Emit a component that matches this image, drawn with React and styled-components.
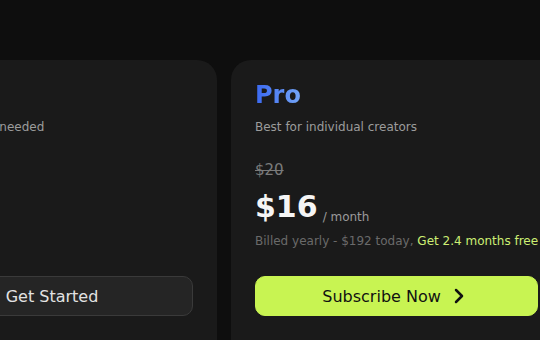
import React from 'react';
import styled, { createGlobalStyle } from 'styled-components';
import { ChevronRight } from 'lucide-react';

const GlobalStyle = createGlobalStyle`
  * { box-sizing: border-box; }
  body {
    margin: 0;
    background: #0e0e0e;
    font-family: 'DejaVu Sans', 'Liberation Sans', sans-serif;
    overflow: hidden;
  }
`;

const plans = [
	{
		name: 'Free',
		tagline: 'No credit card needed',
		price: '$0',
		note: 'Free forever',
		cta: 'Get Started',
		primary: false,
	},
	{
		name: 'Pro',
		tagline: 'Best for individual creators',
		oldPrice: '$20',
		price: '$16',
		period: '/ month',
		note: 'Billed yearly - $192 today,',
		bonus: 'Get 2.4 months free',
		cta: 'Subscribe Now',
		primary: true,
	},
];

function App() {
	return (
		<Page>
			<GlobalStyle />
			<Row>
				{plans.map((plan) => (
					<Card key={plan.name}>
						<Title $accent={plan.primary}>{plan.name}</Title>
						<Tagline>{plan.tagline}</Tagline>
						<OldPrice $hidden={!plan.oldPrice}>{plan.oldPrice || '$0'}</OldPrice>
						<PriceRow>
							<Price>{plan.price}</Price>
							{plan.period && <Period>{plan.period}</Period>}
						</PriceRow>
						<Note>
							{plan.note}
							{plan.bonus && <Bonus> {plan.bonus}</Bonus>}
						</Note>
						<Button $primary={plan.primary}>
							{plan.cta}
							{plan.primary && <ChevronRight size={24} strokeWidth={2.5} />}
						</Button>
					</Card>
				))}
			</Row>
		</Page>
	);
}

const Page = styled.div`
  min-height: 100vh;
  padding-top: 60px;
  background: #0e0e0e;
`;

const Row = styled.div`
  display: flex;
  gap: 14px;
  margin-left: -113px;
`;

const Card = styled.div`
  flex: 0 0 330px;
  display: flex;
  flex-direction: column;
  background: #1a1a1a;
  border-radius: 20px;
  padding: 20px 24px 40px;
  min-height: 320px;
`;

const Title = styled.h2`
  margin: 0;
  font-size: 24px;
  line-height: 30px;
  font-weight: 700;
  color: #e6e6e6;
  ${(p) => p.$accent && `
    background: linear-gradient(90deg, #3a68f0 0%, #74a6f8 100%);
    -webkit-background-clip: text;
    background-clip: text;
    color: transparent;
    width: fit-content;
  `}
`;

const Tagline = styled.p`
  margin: 8px 0 0;
  font-size: 12px;
  line-height: 18px;
  color: #9c9c9c;
`;

const OldPrice = styled.div`
  margin-top: 24px;
  font-size: 15px;
  line-height: 20px;
  color: #7a7a7a;
  text-decoration: line-through;
  visibility: ${(p) => (p.$hidden ? 'hidden' : 'visible')};
`;

const PriceRow = styled.div`
  display: flex;
  align-items: flex-end;
  gap: 5px;
  margin-top: 9px;
`;

const Price = styled.span`
  font-size: 30px;
  line-height: 36px;
  font-weight: 700;
  color: #f5f5f5;
`;

const Period = styled.span`
  font-size: 12px;
  line-height: 16px;
  color: #9a9a9a;
`;

const Note = styled.p`
  margin: 7px 0 0;
  font-size: 12px;
  line-height: 18px;
  color: #6a6a6a;
  white-space: nowrap;
`;

const Bonus = styled.span`
  color: #cdef74;
`;

const Button = styled.button`
  margin-top: 26px;
  height: 40px;
  display: flex;
  align-items: center;
  justify-content: center;
  gap: 6px;
  border-radius: 10px;
  font-family: inherit;
  font-size: 16px;
  cursor: pointer;
  border: 1px solid ${(p) => (p.$primary ? '#c8f452' : '#3a3a3a')};
  background: ${(p) => (p.$primary ? '#c8f452' : '#252525')};
  color: ${(p) => (p.$primary ? '#111111' : '#e2e2e2')};
`;

export default App;
